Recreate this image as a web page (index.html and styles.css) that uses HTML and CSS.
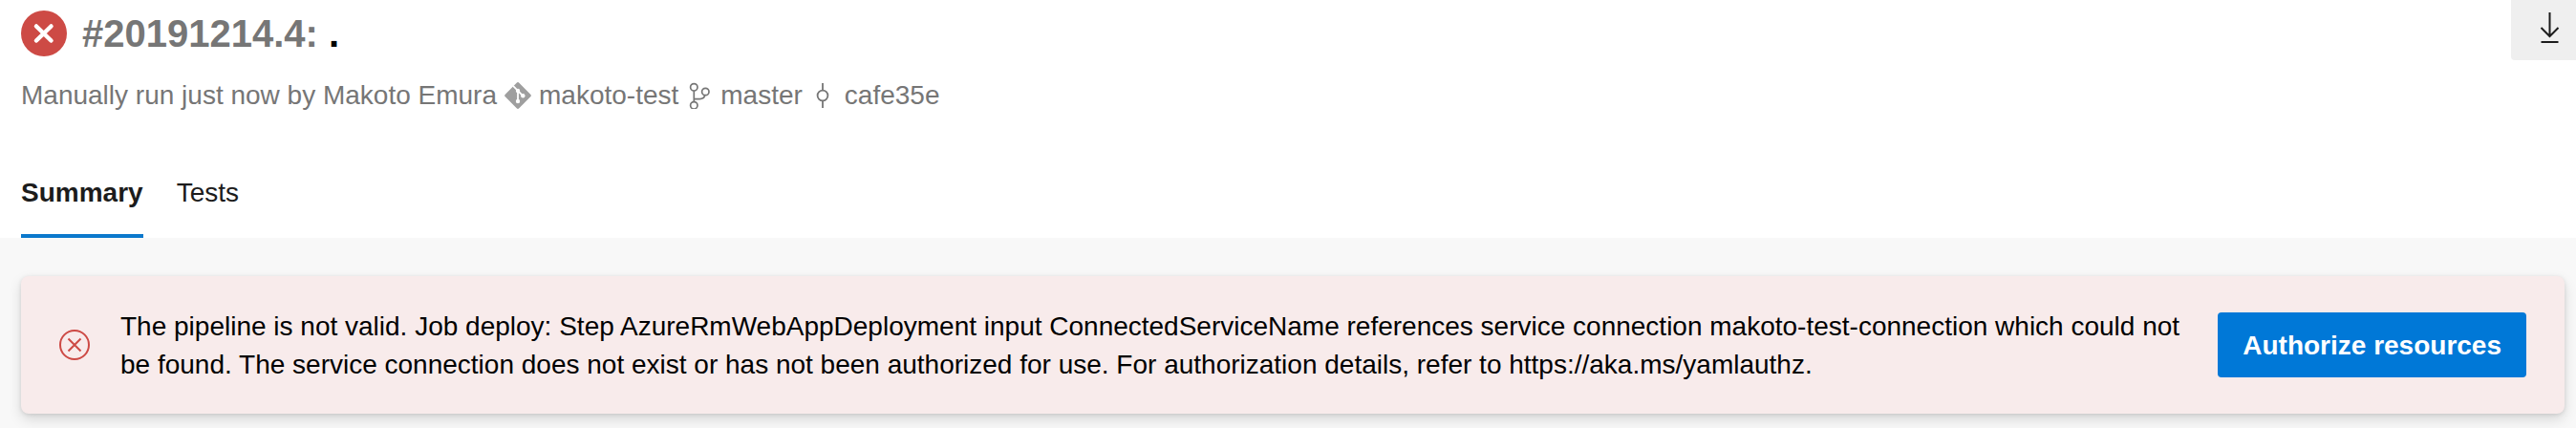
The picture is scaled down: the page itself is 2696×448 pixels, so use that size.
FILE: index.html
```html
<!DOCTYPE html>
<html lang="en">
<head>
<meta charset="utf-8">
<title>#20191214.4 - Pipeline run</title>
<link rel="stylesheet" href="styles.css">
</head>
<body>
<div class="page">
  <header class="header">
    <div class="heading">
      <div class="title-row">
        <svg class="status" viewBox="0 0 48 48" role="img" aria-label="Failed">
          <circle cx="24" cy="24" r="24" fill="#cd4a45"/>
          <path d="M16 16.500 31.500 31.500M31.500 16.500 16 31.500" stroke="#fff" stroke-width="4.500" stroke-linecap="round"/>
        </svg>
        <h1 class="title"><span class="run-number">#20191214.4:</span> .</h1>
      </div>
      <div class="meta">
        <span>Manually run just now by Makoto Emura</span>
        <svg class="icon" viewBox="0 0 28 28" aria-hidden="true">
          <path d="M12.700.8a1.800 1.800 0 0 1 2.600 0l11.900 11.900a1.800 1.800 0 0 1 0 2.600L15.300 27.200a1.800 1.800 0 0 1-2.600 0L.8 15.300a1.800 1.800 0 0 1 0-2.600z" fill="#9f9f9f"/>
          <path d="M9 3.800 14 9v11M14 9l5.300 5.300" fill="none" stroke="#fff" stroke-width="1.800"/>
          <circle cx="14" cy="9" r="2.200" fill="#fff"/><circle cx="14" cy="20" r="2.200" fill="#fff"/><circle cx="19.300" cy="14.200" r="2.200" fill="#fff"/>
        </svg>
        <span>makoto-test</span>
        <svg class="icon" viewBox="0 0 28 28" fill="none" stroke="#767676" stroke-width="1.700" aria-hidden="true">
          <circle cx="8.300" cy="5.300" r="3.700"/><circle cx="8.300" cy="24.300" r="3.700"/><circle cx="20.300" cy="10" r="3.700"/>
          <path d="M8.300 9v11.600M8.300 17.600h6c3.500 0 5-1.500 5.300-3.900"/>
        </svg>
        <span>master</span>
        <svg class="icon" viewBox="0 0 28 28" fill="none" stroke="#767676" stroke-width="1.800" aria-hidden="true">
          <circle cx="13" cy="14" r="5.400"/><path d="M13 1v7.600M13 19.400V27"/>
        </svg>
        <span>cafe35e</span>
      </div>
    </div>
    <button class="download" type="button" aria-label="Download">
      <svg class="download-icon" viewBox="0 0 32 36" fill="none" stroke="#1c1c1c" stroke-width="2" aria-hidden="true">
        <path d="M16.500 1v25M7.500 17l9 9 9-9M7.500 32h18"/>
      </svg>
    </button>
  </header>
  <nav class="tabs">
    <a class="tab tab-active" href="#summary" aria-current="page">Summary</a>
    <a class="tab" href="#tests">Tests</a>
  </nav>
  <main class="content">
    <section class="alert" role="alert">
      <svg class="alert-icon" viewBox="0 0 32 32" fill="none" stroke="#cd4a45" stroke-width="2" aria-hidden="true">
        <circle cx="16" cy="16" r="15"/><path d="M9.500 9.500l13 13M22.500 9.500l-13 13"/>
      </svg>
      <p class="message">The pipeline is not valid. Job deploy: Step AzureRmWebAppDeployment input ConnectedServiceName references service connection makoto-test-connection which could not be found. The service connection does not exist or has not been authorized for use. For authorization details, refer to https://aka.ms/yamlauthz.</p>
      <button class="authorize" type="button">Authorize resources</button>
    </section>
  </main>
</div>
</body>
</html>
```
FILE: styles.css
```css
* {
  box-sizing: border-box;
}

body {
  margin: 0;
  background: #fff;
  color: #000;
  font: 28px/40px "Liberation Sans", Arial, sans-serif;
}

.page {
  display: flex;
  flex-direction: column;
  min-height: 100vh;
}

.header {
  display: flex;
  align-items: flex-start;
  justify-content: space-between;
  padding-left: 22px;
}

.heading {
  padding-top: 11px;
}

.title-row {
  display: flex;
  align-items: center;
  gap: 16px;
}

.status {
  width: 48px;
  height: 48px;
}

.title {
  margin: 0;
  font-size: 40px;
  line-height: 48px;
}

.run-number {
  color: #767676;
}

.meta {
  display: flex;
  flex-wrap: wrap;
  align-items: center;
  gap: 8px;
  margin-top: 21px;
  color: #767676;
}

.icon {
  width: 28px;
  height: 28px;
}

.download {
  flex: none;
  padding: 12px 12px 15px 24px;
  border: 0;
  border-radius: 0 0 0 4px;
  background: #efefef;
}

.download-icon {
  display: block;
  width: 32px;
  height: 36px;
}

.tabs {
  display: flex;
  gap: 35px;
  margin-top: 62px;
  padding-left: 22px;
}

.tab {
  padding-bottom: 23px;
  border-bottom: 4px solid transparent;
  color: #1c1c1c;
  text-decoration: none;
}

.tab-active {
  border-color: #0b78cc;
  font-weight: bold;
}

.content {
  flex: 1;
  padding: 40px 12px 15px 22px;
  background: #f8f8f8;
}

.alert {
  display: flex;
  align-items: center;
  gap: 32px;
  padding: 31px 40px;
  border-radius: 8px;
  background: #f8ebeb;
  box-shadow: 0 6px 14px rgba(0, 0, 0, 0.13), 0 1px 4px rgba(0, 0, 0, 0.11);
}

.alert-icon {
  flex: none;
  width: 32px;
  height: 32px;
}

.message {
  flex: 1;
  margin: 0;
  padding-top: 2px;
}

.authorize {
  flex: none;
  padding: 15px 26px 13px;
  border: 0;
  border-radius: 4px;
  background: #0078d7;
  color: #fff;
  font: inherit;
  font-weight: bold;
}
```
